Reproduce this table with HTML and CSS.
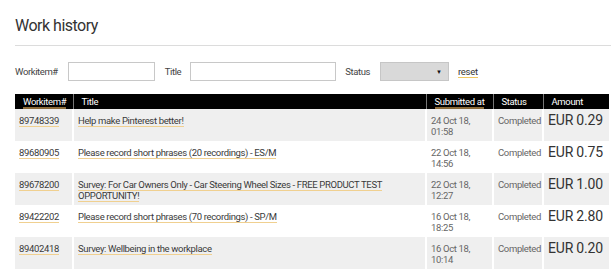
FILE: index.html
```html
<!DOCTYPE html>
<html>
<head>
<meta charset="utf-8">
<link rel="stylesheet" href="styles.css">
</head>
<body>
<div class="page">
  <h1 class="title">Work history</h1>
  <form class="filters">
    <label class="flabel">Workitem#</label>
    <input class="finput finput-id" type="text">
    <label class="flabel">Title</label>
    <input class="finput finput-title" type="text">
    <label class="flabel">Status</label>
    <div class="fselect"><span class="caret">&#9660;</span></div>
    <a class="reset">reset</a>
  </form>
  <table class="grid">
    <colgroup>
      <col class="c-id"><col class="c-title"><col class="c-date"><col class="c-status"><col class="c-amt">
    </colgroup>
    <thead>
      <tr>
        <th><span class="sort">Workitem#</span></th>
        <th>Title</th>
        <th><span class="sort">Submitted at</span></th>
        <th>Status</th>
        <th>Amount</th>
      </tr>
    </thead>
    <tbody>
      <tr>
        <td><a class="lnk">89748339</a></td>
        <td><a class="lnk">Help make Pinterest better!</a></td>
        <td class="date">24 Oct 18,<br>01:58</td>
        <td class="status">Completed</td>
        <td class="amt">EUR 0.29</td>
      </tr>
      <tr>
        <td><a class="lnk">89680905</a></td>
        <td><a class="lnk">Please record short phrases (20 recordings) - ES/M</a></td>
        <td class="date">22 Oct 18,<br>14:56</td>
        <td class="status">Completed</td>
        <td class="amt">EUR 0.75</td>
      </tr>
      <tr>
        <td><a class="lnk">89678200</a></td>
        <td><a class="lnk">Survey: For Car Owners Only - Car Steering Wheel Sizes - FREE PRODUCT TEST OPPORTUNITY!</a></td>
        <td class="date">22 Oct 18,<br>12:27</td>
        <td class="status">Completed</td>
        <td class="amt">EUR 1.00</td>
      </tr>
      <tr>
        <td><a class="lnk">89422202</a></td>
        <td><a class="lnk">Please record short phrases (70 recordings) - SP/M</a></td>
        <td class="date">16 Oct 18,<br>18:25</td>
        <td class="status">Completed</td>
        <td class="amt">EUR 2.80</td>
      </tr>
      <tr>
        <td><a class="lnk">89402418</a></td>
        <td><a class="lnk">Survey: Wellbeing in the workplace</a></td>
        <td class="date">16 Oct 18,<br>10:14</td>
        <td class="status">Completed</td>
        <td class="amt">EUR 0.20</td>
      </tr>
    </tbody>
  </table>
</div>
</body>
</html>
```
FILE: styles.css
```css
html, body {
  margin: 0;
  padding: 0;
  background: #fff;
}
body {
  font-family: Roboto, "Liberation Sans", Arial, sans-serif;
  color: #333;
}
.page {
  padding: 16px 2px 0 15px;
}
.title {
  margin: 0 -2px 0 0;
  font-size: 16px;
  font-weight: 400;
  letter-spacing: -0.5px;
  line-height: 20px;
  color: #333;
  padding-bottom: 9px;
  border-bottom: 1px solid #dcdcdc;
}
.filters {
  display: flex;
  align-items: center;
  margin-top: 16px;
  height: 19px;
}
.flabel {
  font-size: 9.5px;
  letter-spacing: -0.4px;
  color: #444;
}
.finput {
  box-sizing: border-box;
  height: 19px;
  border: 1px solid #c8c8c8;
  padding: 0;
  background: #fff;
}
.finput-id { width: 87px; margin: 0 10px 0 10px; }
.finput-title { width: 146px; margin: 0 9px 0 9px; }
.fselect {
  box-sizing: border-box;
  width: 69px;
  height: 19px;
  background: #d9d9d9;
  border: 1px solid #c6c6c6;
  margin: 0 9px 0 10px;
  display: flex;
  align-items: center;
  justify-content: flex-end;
  padding-right: 6px;
}
.caret {
  font-size: 6px;
  color: #111;
}
.reset {
  font-size: 9.5px;
  letter-spacing: -0.3px;
  color: #333;
  border-bottom: 1px solid #f0c860;
  line-height: 11px;
}
.grid {
  margin-top: 13px;
  width: 594px;
  border-collapse: collapse;
  table-layout: fixed;
  font-size: 9.5px;
  letter-spacing: -0.35px;
}
.c-id { width: 58px; }
.c-title { width: 353px; }
.c-date { width: 67px; }
.c-status { width: 50px; }
.c-amt { width: 66px; }
.grid th {
  background: #000;
  color: #fff;
  font-weight: 400;
  text-align: left;
  height: 15px;
  padding: 0 2px 0 8px;
  line-height: 13px;
  border-left: 1px solid #777;
  white-space: nowrap;
}
.grid th:first-child { border-left: none; }
.sort {
  display: inline-block;
  border-bottom: 2px solid #8a6a3a;
  line-height: 11px;
}
.grid td {
  vertical-align: top;
  padding: 6px 4px 4px 4px;
  height: 21px;
  line-height: 11px;
  border-left: 2px solid #fff;
}
.grid td:first-child { border-left: none; }
.grid tbody tr:nth-child(odd) td { background: #efefef; }
.grid tbody tr:nth-child(even) td { background: #fff; }
.lnk {
  color: #3a3a3a;
  border-bottom: 1px solid #f0d090;
}
.date { color: #666; }
.status { color: #666; white-space: nowrap; }
.amt {
  font-size: 14px;
  letter-spacing: -0.2px;
  color: #333;
  line-height: 14px;
  padding-top: 4px;
  white-space: nowrap;
}
```
